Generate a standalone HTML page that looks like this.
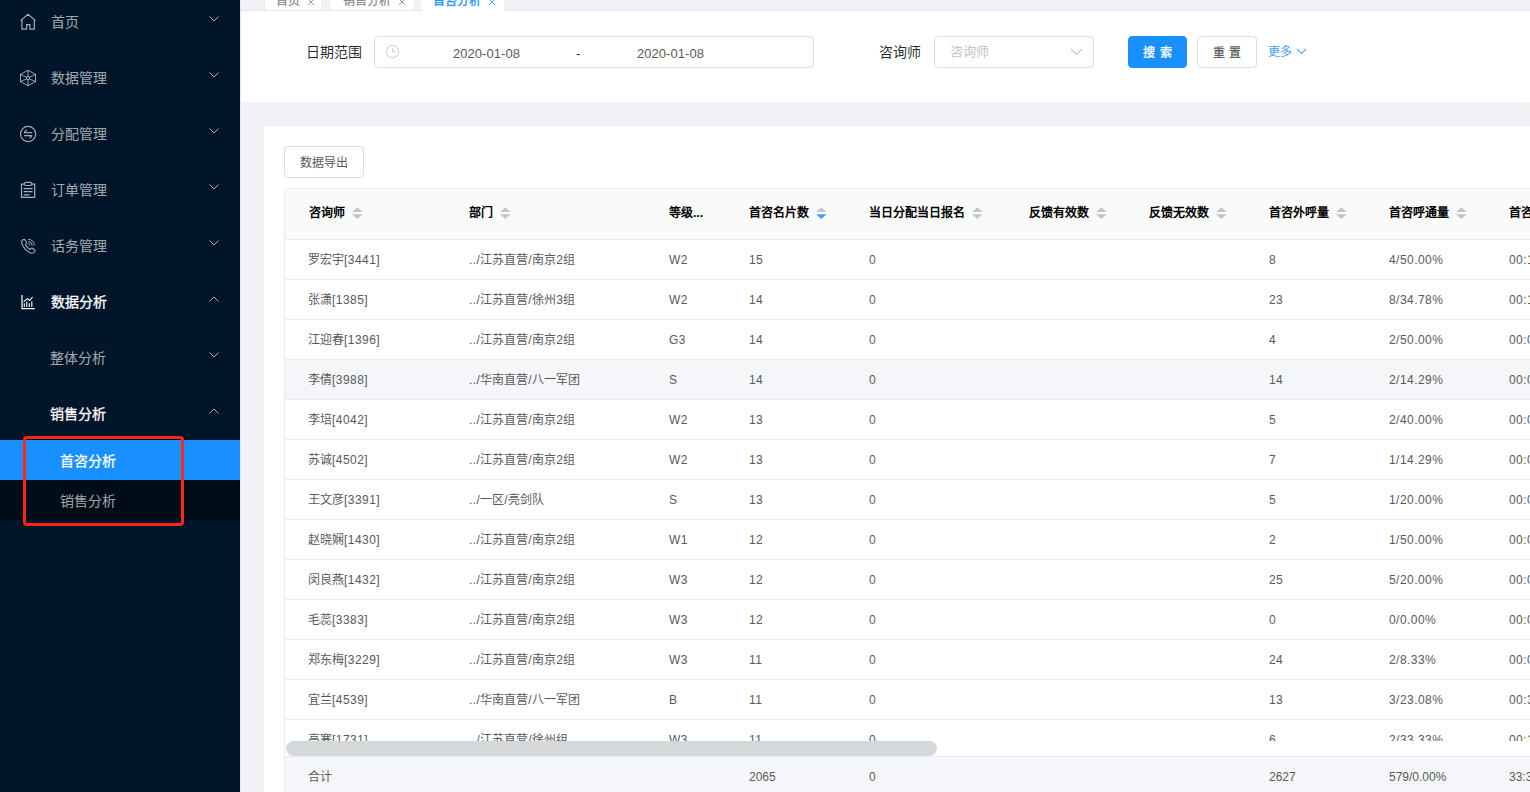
<!DOCTYPE html>
<html lang="zh-CN">
<head>
<meta charset="utf-8">
<style>
*{box-sizing:border-box;margin:0;padding:0}
html,body{width:1530px;height:792px;overflow:hidden;background:#f0f2f5;font-family:"Liberation Sans",sans-serif;font-size:12px;color:#595959}
.abs{position:absolute}
#side{position:absolute;left:0;top:0;width:240px;height:792px;background:#001529;overflow:hidden}
.mi{position:absolute;left:0;width:240px;height:40px;line-height:40px;font-size:14px;color:rgba(255,255,255,.65);white-space:nowrap}
.mi .t{position:absolute;left:51px;top:0}
.ar{position:absolute;color:rgba(255,255,255,.65)}
.mi.open{color:#fff}
.mi.open .t,.sub.sel .t,.med{-webkit-text-stroke:.3px currentColor}
.sic{position:absolute;left:0;top:0;color:rgba(255,255,255,.65)}
.sub{position:absolute;left:0;width:240px;height:40px;line-height:40px;font-size:14px;color:rgba(255,255,255,.65);background:#000c17;white-space:nowrap}
.sub .t{position:absolute;left:60px;top:1px}
.sub.sel{background:#1890ff;color:#fff}
#redbox{position:absolute;left:23px;top:436px;width:161px;height:90px;border:3px solid #ff2416;border-radius:4px}
#main{position:absolute;left:240px;top:0;width:1290px;height:792px;background:#f0f2f5;border-left:1px solid #e4e7ec}
.tab{position:absolute;top:-30px;height:40px;background:#fff;border:1px solid #e8e8e8;border-bottom:0;border-radius:4px 4px 0 0;font-size:12px;line-height:34px;color:#7f7f7f;-webkit-text-stroke:.15px currentColor;white-space:nowrap}
.tab .tt{position:absolute;left:11px;top:24px;line-height:12px}
.tab .tx{position:absolute;right:7px;top:26.5px;opacity:.8}
.tab.act .tt{left:11px}
.tab.act{color:#1890ff;height:41px;-webkit-text-stroke:.3px currentColor;border-color:#fff}
#tabline{position:absolute;left:241px;top:10px;width:1289px;height:1px;background:#e8e8e8}
#hdr{position:absolute;left:241px;top:11px;width:1289px;height:91px;background:#fff;border-radius:4px 0 0 0}
.lbl{position:absolute;font-size:14px;color:rgba(0,0,0,.85);line-height:32px;top:36px;white-space:nowrap}
.box{position:absolute;top:36px;height:32px;border:1px solid #d9dce3;border-radius:4px;background:#fff}
.dt{position:absolute;top:38px;line-height:32px;font-size:13px;letter-spacing:.05px;color:#595959;white-space:nowrap}
.btn{position:absolute;top:36px;height:32px;border:1px solid #d9dce3;border-radius:4px;background:#fff;font-size:14px;line-height:30px;text-align:center;color:rgba(0,0,0,.62);white-space:nowrap}
.btn.sb{line-height:33px;font-size:12px;letter-spacing:.5px;text-indent:.5px;-webkit-text-stroke:.25px currentColor}
.btn.pri.sb{-webkit-text-stroke:.35px currentColor}
.btn.pri{background:#1890ff;border-color:#1890ff;color:#fff}
.btn.exp{font-size:12px;color:#595959;line-height:32px}
#card{position:absolute;left:264px;top:126px;width:1300px;height:700px;background:#fff;border-radius:4px}
#tbl{position:absolute;left:284px;top:188px;width:1246px;height:620px;border-left:1px solid #e8eaf0;overflow:hidden;border-radius:4px 0 0 0}
#thead{position:absolute;left:0;top:0;width:1400px;height:52px;background:#fafafa;border-top:1px solid #e8eaf0;border-bottom:1px solid #e8eaf0}
.hc{position:absolute;top:0;line-height:51px;font-size:12px;font-weight:bold;color:#000;white-space:nowrap}
.srt{position:absolute;margin-left:7px;margin-top:19px}
#tbody{position:absolute;left:0;top:52px;width:1400px;height:501px;overflow:hidden}
.row{position:absolute;left:0;width:1400px;height:40px;border-bottom:1px solid #e9ebf0;white-space:nowrap}
.row.hov{background:#f5f6fa}
.c{position:absolute;top:1px;line-height:39px;font-size:12px;color:#595959;white-space:nowrap}
#sbar{position:absolute;left:0;top:553px;width:1400px;height:15px;background:#fff}
#thumb{position:absolute;left:1px;top:0;width:651px;height:15px;border-radius:7.5px;background:#d5d8db}
#tfoot{position:absolute;left:0;top:568px;width:1400px;height:52px;background:#f5f6fa;border-top:1px solid #e9ebf0}

.n{letter-spacing:.45px}
#tfoot .n{letter-spacing:0}

</style>
</head>
<body>
<div id="side"><div class="mi" style="top:2px"><span class="t">首页</span><svg class="ar" width="12" height="8" style="left:208px;top:13px" viewBox="0 0 12 8"><path d="M1.5 1.5 L6 6 L10.5 1.5" fill="none" stroke="currentColor" stroke-width="1"/></svg></div><div class="mi" style="top:58px"><span class="t">数据管理</span><svg class="ar" width="12" height="8" style="left:208px;top:13px" viewBox="0 0 12 8"><path d="M1.5 1.5 L6 6 L10.5 1.5" fill="none" stroke="currentColor" stroke-width="1"/></svg></div><div class="mi" style="top:114px"><span class="t">分配管理</span><svg class="ar" width="12" height="8" style="left:208px;top:13px" viewBox="0 0 12 8"><path d="M1.5 1.5 L6 6 L10.5 1.5" fill="none" stroke="currentColor" stroke-width="1"/></svg></div><div class="mi" style="top:170px"><span class="t">订单管理</span><svg class="ar" width="12" height="8" style="left:208px;top:13px" viewBox="0 0 12 8"><path d="M1.5 1.5 L6 6 L10.5 1.5" fill="none" stroke="currentColor" stroke-width="1"/></svg></div><div class="mi" style="top:226px"><span class="t">话务管理</span><svg class="ar" width="12" height="8" style="left:208px;top:13px" viewBox="0 0 12 8"><path d="M1.5 1.5 L6 6 L10.5 1.5" fill="none" stroke="currentColor" stroke-width="1"/></svg></div><div class="mi open" style="top:282px"><span class="t">数据分析</span><svg class="ar" width="12" height="8" style="left:208px;top:13px" viewBox="0 0 12 8"><path d="M1.5 6.5 L6 2 L10.5 6.5" fill="none" stroke="currentColor" stroke-width="1"/></svg></div><div class="mi" style="top:338px"><span class="t" style="left:50px">整体分析</span><svg class="ar" width="12" height="8" style="left:208px;top:13px" viewBox="0 0 12 8"><path d="M1.5 1.5 L6 6 L10.5 1.5" fill="none" stroke="currentColor" stroke-width="1"/></svg></div><div class="mi open" style="top:394px"><span class="t" style="left:50px">销售分析</span><svg class="ar" width="12" height="8" style="left:208px;top:13px" viewBox="0 0 12 8"><path d="M1.5 6.5 L6 2 L10.5 6.5" fill="none" stroke="currentColor" stroke-width="1"/></svg></div><div class="sub sel" style="top:440px"><span class="t">首咨分析</span></div><div class="sub" style="top:480px"><span class="t">销售分析</span></div><svg class="sic" width="240" height="792" viewBox="0 0 240 792"><path d="M20.6 20.6 L28.1 14.2 L35.4 20.6 M21.9 20.1 V29.2 H26.6 V24.6 H29.9 V29.2 H34.3 V20.1" fill="none" stroke="currentColor" stroke-width="1.2" stroke-linejoin="miter"/></svg><svg class="sic" width="240" height="792" viewBox="0 0 240 792"><path d="M28 70.3 L35.5 74.4 V81.6 L28 85.7 L20.5 81.6 V74.4 Z M28 70.3 V76.5 M28 79.7 V85.7 M20.5 74.4 L26.6 77.3 M35.5 74.4 L29.4 77.3 M20.5 81.6 L26.6 78.9 M35.5 81.6 L29.4 78.9" fill="none" stroke="currentColor" stroke-width="0.95" stroke-linejoin="round"/><circle cx="28" cy="78.1" r="1.6" fill="none" stroke="currentColor" stroke-width="0.95"/></svg><svg class="sic" width="240" height="792" viewBox="0 0 240 792"><circle cx="28.1" cy="134" r="7.6" fill="none" stroke="currentColor" stroke-width="1.2"/><path d="M24 132.6 H32.2 M24.2 132.4 L26.6 130 M24 135.6 H32.2 M32 135.8 L29.6 138.2" fill="none" stroke="currentColor" stroke-width="1.2"/></svg><svg class="sic" width="240" height="792" viewBox="0 0 240 792"><path d="M24.4 184.1 H21.5 V197.4 H34.7 V184.1 H31.8" fill="none" stroke="currentColor" stroke-width="1.2"/><rect x="24.6" y="182.4" width="7.2" height="3.1" rx="1.4" fill="none" stroke="currentColor" stroke-width="1.1"/><path d="M23.6 188.6 H32.6 M23.6 191.7 H32.6 M23.6 194.8 H29.6" fill="none" stroke="currentColor" stroke-width="1.2"/></svg><svg class="sic" width="240" height="792" viewBox="0 0 240 792"><path d="M23.2 239.6 C22 240.3 21.4 241.6 21.8 243.2 C22.8 247.4 26.6 251.6 30.6 253 C32.2 253.5 33.6 253.1 34.4 252 L35 251 C35.2 250.6 35 250.1 34.6 249.8 L32.2 248.2 C31.8 248 31.3 248 31 248.4 L30.2 249.4 C28.2 248.6 26.2 246.4 25.4 244.4 L26.4 243.6 C26.8 243.3 26.8 242.8 26.6 242.4 L25 240 C24.7 239.5 24.2 239.3 23.8 239.5 Z" fill="none" stroke="currentColor" stroke-width="1.1" stroke-linejoin="round"/><path d="M28.2 239.3 A6.5 6.5 0 0 1 34.6 245.3 M28.2 241.6 A4.3 4.3 0 0 1 32.4 245.6 M28.2 243.7 A2.2 2.2 0 0 1 30.2 245.6" fill="none" stroke="currentColor" stroke-width="1"/></svg><svg class="sic" style="color:#fff" width="240" height="792" viewBox="0 0 240 792"><path d="M22 295 V308.6 H34.8" fill="none" stroke="currentColor" stroke-width="1.2"/><path d="M23.6 301.8 L27.3 298.6 L29.6 300.4 L32.6 297" fill="none" stroke="currentColor" stroke-width="1.1"/><path d="M24.3 303.3 V306.9 M26.8 301.4 V306.9 M29.3 303.2 V306.9 M31.8 301.6 V306.9" fill="none" stroke="currentColor" stroke-width="1.1"/></svg><div id="redbox"></div></div><div id="main"></div><div id="tabline"></div><div class="tab" style="left:264px;width:59px"><span class="tt" style="left:11px">首页</span><svg class="tx" style="right:7px" width="8" height="8" viewBox="0 0 8 8"><path d="M1 1 L7 7 M7 1 L1 7" fill="none" stroke="currentColor" stroke-width="1"/></svg></div><div class="tab" style="left:329px;width:86px"><span class="tt" style="left:13px">销售分析</span><svg class="tx" style="right:8px" width="8" height="8" viewBox="0 0 8 8"><path d="M1 1 L7 7 M7 1 L1 7" fill="none" stroke="currentColor" stroke-width="1"/></svg></div><div class="tab act" style="left:421px;width:83px"><span class="tt" style="left:11px">首咨分析</span><svg class="tx" style="right:7px" width="8" height="8" viewBox="0 0 8 8"><path d="M1 1 L7 7 M7 1 L1 7" fill="none" stroke="currentColor" stroke-width="1"/></svg></div><div id="hdr"></div><div class="lbl" style="left:306px">日期范围</div><div class="box" style="left:374px;width:440px"></div><svg class="abs" style="left:385px;top:44px" width="15" height="15" viewBox="0 0 15 15"><circle cx="7.5" cy="7.5" r="6.2" fill="none" stroke="#cfd3da" stroke-width="1.1"/><path d="M7.5 3.8 V7.8 H10.6" fill="none" stroke="#cfd3da" stroke-width="1.1"/></svg><div class="dt" style="left:453px">2020-01-08</div><div class="dt" style="left:576px;color:#333">-</div><div class="dt" style="left:637px">2020-01-08</div><div class="lbl" style="left:879px">咨询师</div><div class="box" style="left:934px;width:160px"></div><div class="lbl" style="left:950px;color:#c0c4cc;font-size:13px">咨询师</div><svg class="abs" style="left:1070px;top:48px" width="13" height="8" viewBox="0 0 13 8"><path d="M1 1 L6.5 6.5 L12 1" fill="none" stroke="#c0c4cc" stroke-width="1.1"/></svg><div class="btn pri sb" style="left:1128px;width:59px">搜 索</div><div class="btn sb" style="left:1197px;width:60px">重 置</div><div class="lbl" style="left:1268px;color:#3f9bfb;font-size:12px">更多</div><svg class="abs" style="left:1296px;top:48px" width="11" height="7" viewBox="0 0 11 7"><path d="M1 1 L5.5 5.5 L10 1" fill="none" stroke="#5aa9ff" stroke-width="1.1"/></svg><div id="card"></div><div class="btn exp" style="left:284px;top:146px;width:80px">数据导出</div><div id="tbl"><div id="thead"></div><div class="hc" style="left:24px">咨询师<svg class="srt" width="11" height="13" viewBox="0 0 11 13"><path d="M0 5 L5.25 0.2 L10.5 5 Z" fill="#bfc4cd"/><path d="M0 7.2 L5.25 12 L10.5 7.2 Z" fill="#bfc4cd"/></svg></div><div class="hc" style="left:184px">部门<svg class="srt" width="11" height="13" viewBox="0 0 11 13"><path d="M0 5 L5.25 0.2 L10.5 5 Z" fill="#bfc4cd"/><path d="M0 7.2 L5.25 12 L10.5 7.2 Z" fill="#bfc4cd"/></svg></div><div class="hc" style="left:384px">等级...</div><div class="hc" style="left:464px">首咨名片数<svg class="srt" width="11" height="13" viewBox="0 0 11 13"><path d="M0 5 L5.25 0.2 L10.5 5 Z" fill="#bfc4cd"/><path d="M0 7.2 L5.25 12 L10.5 7.2 Z" fill="#3f9cff"/></svg></div><div class="hc" style="left:584px">当日分配当日报名<svg class="srt" width="11" height="13" viewBox="0 0 11 13"><path d="M0 5 L5.25 0.2 L10.5 5 Z" fill="#bfc4cd"/><path d="M0 7.2 L5.25 12 L10.5 7.2 Z" fill="#bfc4cd"/></svg></div><div class="hc" style="left:744px">反馈有效数<svg class="srt" width="11" height="13" viewBox="0 0 11 13"><path d="M0 5 L5.25 0.2 L10.5 5 Z" fill="#bfc4cd"/><path d="M0 7.2 L5.25 12 L10.5 7.2 Z" fill="#bfc4cd"/></svg></div><div class="hc" style="left:864px">反馈无效数<svg class="srt" width="11" height="13" viewBox="0 0 11 13"><path d="M0 5 L5.25 0.2 L10.5 5 Z" fill="#bfc4cd"/><path d="M0 7.2 L5.25 12 L10.5 7.2 Z" fill="#bfc4cd"/></svg></div><div class="hc" style="left:984px">首咨外呼量<svg class="srt" width="11" height="13" viewBox="0 0 11 13"><path d="M0 5 L5.25 0.2 L10.5 5 Z" fill="#bfc4cd"/><path d="M0 7.2 L5.25 12 L10.5 7.2 Z" fill="#bfc4cd"/></svg></div><div class="hc" style="left:1104px">首咨呼通量<svg class="srt" width="11" height="13" viewBox="0 0 11 13"><path d="M0 5 L5.25 0.2 L10.5 5 Z" fill="#bfc4cd"/><path d="M0 7.2 L5.25 12 L10.5 7.2 Z" fill="#bfc4cd"/></svg></div><div class="hc" style="left:1224px">首咨通话时长<svg class="srt" width="11" height="13" viewBox="0 0 11 13"><path d="M0 5 L5.25 0.2 L10.5 5 Z" fill="#bfc4cd"/><path d="M0 7.2 L5.25 12 L10.5 7.2 Z" fill="#bfc4cd"/></svg></div><div id="tbody"><div class="row" style="top:0px"><div class="c" style="left:23px">罗宏宇<span class="n">[3441]</span></div><div class="c" style="left:184px"><span class="n">../</span>江苏直营<span class="n">/</span>南京<span class="n">2</span>组</div><div class="c" style="left:384px"><span class="n">W2</span></div><div class="c" style="left:464px"><span class="n">15</span></div><div class="c" style="left:584px"><span class="n">0</span></div><div class="c" style="left:984px"><span class="n">8</span></div><div class="c" style="left:1104px"><span class="n">4/50.00%</span></div><div class="c" style="left:1224px"><span class="n">00:12:33</span></div></div><div class="row" style="top:40px"><div class="c" style="left:23px">张潇<span class="n">[1385]</span></div><div class="c" style="left:184px"><span class="n">../</span>江苏直营<span class="n">/</span>徐州<span class="n">3</span>组</div><div class="c" style="left:384px"><span class="n">W2</span></div><div class="c" style="left:464px"><span class="n">14</span></div><div class="c" style="left:584px"><span class="n">0</span></div><div class="c" style="left:984px"><span class="n">23</span></div><div class="c" style="left:1104px"><span class="n">8/34.78%</span></div><div class="c" style="left:1224px"><span class="n">00:15:21</span></div></div><div class="row" style="top:80px"><div class="c" style="left:23px">江迎春<span class="n">[1396]</span></div><div class="c" style="left:184px"><span class="n">../</span>江苏直营<span class="n">/</span>南京<span class="n">2</span>组</div><div class="c" style="left:384px"><span class="n">G3</span></div><div class="c" style="left:464px"><span class="n">14</span></div><div class="c" style="left:584px"><span class="n">0</span></div><div class="c" style="left:984px"><span class="n">4</span></div><div class="c" style="left:1104px"><span class="n">2/50.00%</span></div><div class="c" style="left:1224px"><span class="n">00:05:12</span></div></div><div class="row hov" style="top:120px"><div class="c" style="left:23px">李倩<span class="n">[3988]</span></div><div class="c" style="left:184px"><span class="n">../</span>华南直营<span class="n">/</span>八一军团</div><div class="c" style="left:384px"><span class="n">S</span></div><div class="c" style="left:464px"><span class="n">14</span></div><div class="c" style="left:584px"><span class="n">0</span></div><div class="c" style="left:984px"><span class="n">14</span></div><div class="c" style="left:1104px"><span class="n">2/14.29%</span></div><div class="c" style="left:1224px"><span class="n">00:03:40</span></div></div><div class="row" style="top:160px"><div class="c" style="left:23px">李培<span class="n">[4042]</span></div><div class="c" style="left:184px"><span class="n">../</span>江苏直营<span class="n">/</span>南京<span class="n">2</span>组</div><div class="c" style="left:384px"><span class="n">W2</span></div><div class="c" style="left:464px"><span class="n">13</span></div><div class="c" style="left:584px"><span class="n">0</span></div><div class="c" style="left:984px"><span class="n">5</span></div><div class="c" style="left:1104px"><span class="n">2/40.00%</span></div><div class="c" style="left:1224px"><span class="n">00:04:11</span></div></div><div class="row" style="top:200px"><div class="c" style="left:23px">苏诚<span class="n">[4502]</span></div><div class="c" style="left:184px"><span class="n">../</span>江苏直营<span class="n">/</span>南京<span class="n">2</span>组</div><div class="c" style="left:384px"><span class="n">W2</span></div><div class="c" style="left:464px"><span class="n">13</span></div><div class="c" style="left:584px"><span class="n">0</span></div><div class="c" style="left:984px"><span class="n">7</span></div><div class="c" style="left:1104px"><span class="n">1/14.29%</span></div><div class="c" style="left:1224px"><span class="n">00:02:45</span></div></div><div class="row" style="top:240px"><div class="c" style="left:23px">王文彦<span class="n">[3391]</span></div><div class="c" style="left:184px"><span class="n">../</span>一区<span class="n">/</span>亮剑队</div><div class="c" style="left:384px"><span class="n">S</span></div><div class="c" style="left:464px"><span class="n">13</span></div><div class="c" style="left:584px"><span class="n">0</span></div><div class="c" style="left:984px"><span class="n">5</span></div><div class="c" style="left:1104px"><span class="n">1/20.00%</span></div><div class="c" style="left:1224px"><span class="n">00:01:30</span></div></div><div class="row" style="top:280px"><div class="c" style="left:23px">赵晓娴<span class="n">[1430]</span></div><div class="c" style="left:184px"><span class="n">../</span>江苏直营<span class="n">/</span>南京<span class="n">2</span>组</div><div class="c" style="left:384px"><span class="n">W1</span></div><div class="c" style="left:464px"><span class="n">12</span></div><div class="c" style="left:584px"><span class="n">0</span></div><div class="c" style="left:984px"><span class="n">2</span></div><div class="c" style="left:1104px"><span class="n">1/50.00%</span></div><div class="c" style="left:1224px"><span class="n">00:06:02</span></div></div><div class="row" style="top:320px"><div class="c" style="left:23px">闵良燕<span class="n">[1432]</span></div><div class="c" style="left:184px"><span class="n">../</span>江苏直营<span class="n">/</span>南京<span class="n">2</span>组</div><div class="c" style="left:384px"><span class="n">W3</span></div><div class="c" style="left:464px"><span class="n">12</span></div><div class="c" style="left:584px"><span class="n">0</span></div><div class="c" style="left:984px"><span class="n">25</span></div><div class="c" style="left:1104px"><span class="n">5/20.00%</span></div><div class="c" style="left:1224px"><span class="n">00:07:15</span></div></div><div class="row" style="top:360px"><div class="c" style="left:23px">毛蕊<span class="n">[3383]</span></div><div class="c" style="left:184px"><span class="n">../</span>江苏直营<span class="n">/</span>南京<span class="n">2</span>组</div><div class="c" style="left:384px"><span class="n">W3</span></div><div class="c" style="left:464px"><span class="n">12</span></div><div class="c" style="left:584px"><span class="n">0</span></div><div class="c" style="left:984px"><span class="n">0</span></div><div class="c" style="left:1104px"><span class="n">0/0.00%</span></div><div class="c" style="left:1224px"><span class="n">00:00:00</span></div></div><div class="row" style="top:400px"><div class="c" style="left:23px">郑东梅<span class="n">[3229]</span></div><div class="c" style="left:184px"><span class="n">../</span>江苏直营<span class="n">/</span>南京<span class="n">2</span>组</div><div class="c" style="left:384px"><span class="n">W3</span></div><div class="c" style="left:464px"><span class="n">11</span></div><div class="c" style="left:584px"><span class="n">0</span></div><div class="c" style="left:984px"><span class="n">24</span></div><div class="c" style="left:1104px"><span class="n">2/8.33%</span></div><div class="c" style="left:1224px"><span class="n">00:08:20</span></div></div><div class="row" style="top:440px"><div class="c" style="left:23px">宜兰<span class="n">[4539]</span></div><div class="c" style="left:184px"><span class="n">../</span>华南直营<span class="n">/</span>八一军团</div><div class="c" style="left:384px"><span class="n">B</span></div><div class="c" style="left:464px"><span class="n">11</span></div><div class="c" style="left:584px"><span class="n">0</span></div><div class="c" style="left:984px"><span class="n">13</span></div><div class="c" style="left:1104px"><span class="n">3/23.08%</span></div><div class="c" style="left:1224px"><span class="n">00:32:10</span></div></div><div class="row" style="top:480px"><div class="c" style="left:23px">高寒<span class="n">[1731]</span></div><div class="c" style="left:184px"><span class="n">../</span>江苏直营<span class="n">/</span>徐州组</div><div class="c" style="left:384px"><span class="n">W3</span></div><div class="c" style="left:464px"><span class="n">11</span></div><div class="c" style="left:584px"><span class="n">0</span></div><div class="c" style="left:984px"><span class="n">6</span></div><div class="c" style="left:1104px"><span class="n">2/33.33%</span></div><div class="c" style="left:1224px"><span class="n">00:11:05</span></div></div></div><div id="sbar"><div id="thumb"></div></div><div id="tfoot"><div class="c" style="left:23px">合计</div><div class="c" style="left:464px"><span class="n">2065</span></div><div class="c" style="left:584px"><span class="n">0</span></div><div class="c" style="left:984px"><span class="n">2627</span></div><div class="c" style="left:1104px"><span class="n">579/0.00%</span></div><div class="c" style="left:1224px"><span class="n">33:35:12</span></div></div></div></body>
</html>
